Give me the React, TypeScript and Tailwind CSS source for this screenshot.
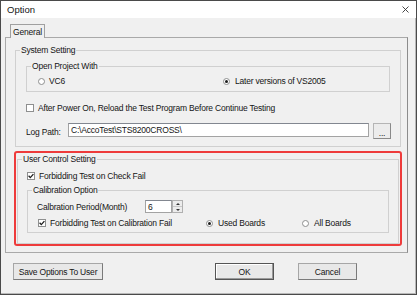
import React from "react";

const Radio = ({ checked }: { checked?: boolean }) => (
  <span className="flex h-[7px] w-[7px] shrink-0 items-center justify-center rounded-full border border-[#8e8f8f] bg-white">
    {checked && <span className="h-[3px] w-[3px] rounded-full bg-[#1c1c1c]" />}
  </span>
);

const Check = ({ checked }: { checked?: boolean }) => (
  <span className="flex h-[8px] w-[8px] shrink-0 items-center justify-center border border-[#8e8f8f] bg-white">
    {checked && (
      <svg width="6" height="6" viewBox="0 0 6 6">
        <path d="M0.6 2.8 L2.3 4.6 L5.4 1.1" stroke="#1c1c1c" strokeWidth="1.3" fill="none" />
      </svg>
    )}
  </span>
);

const Group = ({
  title,
  className,
  children,
}: {
  title: string;
  className: string;
  children?: React.ReactNode;
}) => (
  <fieldset className={`border border-[#d0d0d0] ${className}`}>
    <legend className="ml-[4px] px-[1px] leading-[10px]">{title}</legend>
    {children}
  </fieldset>
);

export default function App() {
  return (
    <div className="h-[297px] w-[419px] bg-white font-['Liberation_Sans',Arial,sans-serif] text-[8.5px] leading-[10px] tracking-[-0.2px] text-[#151515] antialiased">
      <div className="flex h-[295px] w-[417px] flex-col border border-[#4a4a4a] bg-[#f0f0f0] shadow-[inset_-1px_-1px_0_#b8b8b8]">
        {/* title bar */}
        <div className="flex h-[17px] shrink-0 items-center justify-between bg-white pl-[6px] pr-[7px]">
          <span className="text-[9.5px] tracking-normal">Option</span>
          <svg width="7" height="7" viewBox="0 0 7 7">
            <path d="M0.5 0.5 L6.5 6.5 M6.5 0.5 L0.5 6.5" stroke="#333" strokeWidth="0.9" />
          </svg>
        </div>

        <div className="pl-[4px]">
          {/* tab */}
          <div className="relative z-10 -mb-px ml-[5px] mt-[6px] flex h-[14px] w-[35px] items-center justify-center border border-b-0 border-[#a0a0a0] bg-[#f0f0f0] pt-px">
            General
          </div>

          {/* tab page */}
          <div className="h-[216px] w-[403px] border border-[#a9a9a9] border-r-[#8c8c8c]">
            <Group title="System Setting" className="ml-[9px] mt-[7px] h-[102px] w-[386px]">
              <Group title="Open Project With" className="ml-[10px] mt-[6px] h-[31px] w-[364px]">
                <div className="mt-[4px] flex h-[12px] items-center pl-[11px]">
                  <div className="flex w-[185px] items-center gap-[4px]">
                    <Radio />
                    <span>VC6</span>
                  </div>
                  <div className="flex items-center gap-[5px]">
                    <Radio checked />
                    <span>Later versions of VS2005</span>
                  </div>
                </div>
              </Group>

              <div className="ml-[10px] mt-[10px] flex h-[12px] items-center gap-[4px]">
                <Check />
                <span>After Power On, Reload the Test Program Before Continue Testing</span>
              </div>

              <div className="ml-[10px] mt-[9px] flex">
                <span className="w-[42px] pt-[4px]">Log Path:</span>
                <div className="flex h-[14px] w-[301px] items-center border border-[#a3a3a3] border-t-[#828790] bg-white pl-[2px]">
                  C:\AccoTest\STS8200CROSS\
                </div>
                <div className="ml-[4px] flex h-[16px] w-[18px] items-end justify-center border border-[#b5b5b5] border-b-[#8a8a8a] border-r-[#8a8a8a] bg-[#ececec] pb-[2px] leading-[6px]">
                  ...
                </div>
              </div>
            </Group>

            {/* highlighted area */}
            <div className="ml-[8px] mt-[4px] h-[95px] w-[388px] rounded-[3px] border-2 border-[#ee3b3b]">
              <Group title="User Control Setting" className="ml-[1px] mt-[1px] h-[90px] w-[382px]">
                <div className="ml-[9px] mt-[6px] flex h-[12px] items-center gap-[4px]">
                  <Check checked />
                  <span>Forbidding Test on Check Fail</span>
                </div>

                <Group title="Calibration Option" className="ml-[9px] mt-[3px] h-[48px] w-[362px]">
                  <div className="ml-[9px] mt-[5px] flex h-[13px] items-center">
                    <span className="w-[108px]">Calbration Period(Month)</span>
                    <div className="flex h-[13px] w-[27px] items-center border border-[#a3a3a3] border-t-[#828790] bg-white pl-[2px]">
                      6
                    </div>
                    <div className="flex h-[13px] w-[11px] flex-col border border-[#b0b0b0] bg-[#ececec]">
                      <div className="flex flex-1 items-center justify-center border-b border-[#c8c8c8]">
                        <span className="h-0 w-0 border-x-[2px] border-b-[2px] border-x-transparent border-b-[#333]" />
                      </div>
                      <div className="flex flex-1 items-center justify-center">
                        <span className="h-0 w-0 border-x-[2px] border-t-[2px] border-x-transparent border-t-[#333]" />
                      </div>
                    </div>
                  </div>

                  <div className="ml-[10px] mt-[4px] flex h-[12px] items-center">
                    <div className="flex w-[168px] items-center gap-[4px]">
                      <Check checked />
                      <span>Forbidding Test on Calibration Fail</span>
                    </div>
                    <div className="flex w-[96px] items-center gap-[5px]">
                      <Radio checked />
                      <span>Used Boards</span>
                    </div>
                    <div className="flex items-center gap-[5px]">
                      <Radio />
                      <span>All Boards</span>
                    </div>
                  </div>
                </Group>
              </Group>
            </div>
          </div>
        </div>

        {/* buttons */}
        <div className="mt-[10px] flex pl-[12px]">
          <button className="flex h-[17px] w-[90px] items-center justify-center border border-[#a6a6a6] border-b-[#7a7a7a] border-r-[#7a7a7a] bg-[#e8e8e8]">
            Save Options To User
          </button>
          <button className="ml-[112px] flex h-[17px] w-[59px] items-center justify-center border border-[#555] bg-[#e8e8e8] shadow-[inset_-1px_-1px_0_#9a9a9a,inset_1px_1px_0_#fff]">
            OK
          </button>
          <button className="ml-[24px] flex h-[17px] w-[59px] items-center justify-center border border-[#a6a6a6] border-b-[#7a7a7a] border-r-[#7a7a7a] bg-[#e8e8e8]">
            Cancel
          </button>
        </div>
      </div>
    </div>
  );
}
